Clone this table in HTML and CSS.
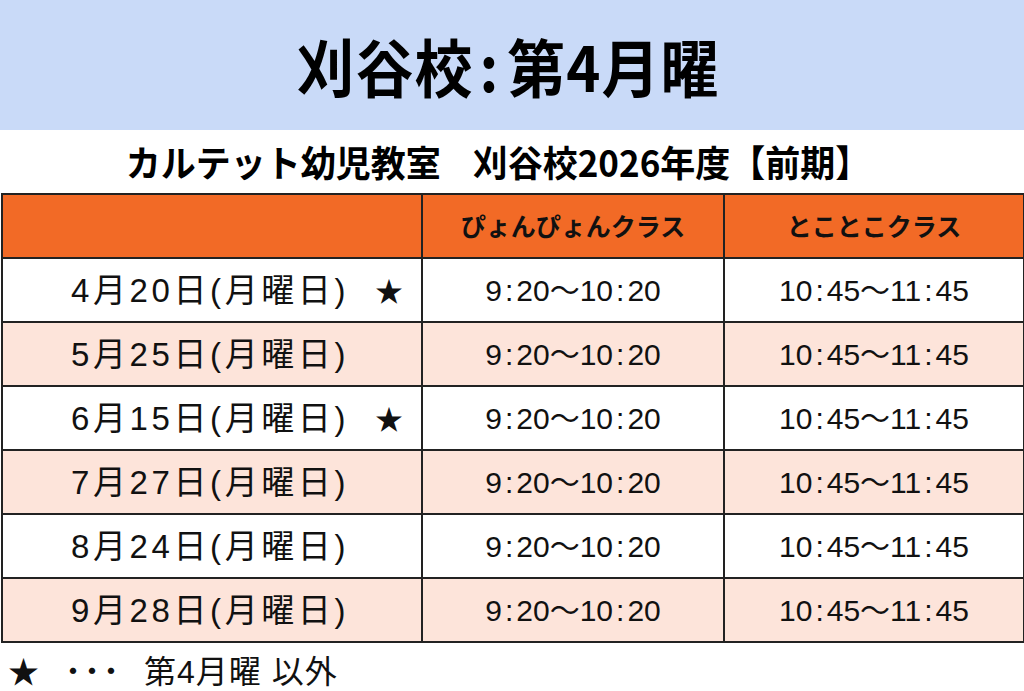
FILE: index.html
```html
<!DOCTYPE html>
<html lang="ja">
<head>
<meta charset="utf-8">
<link rel="stylesheet" href="styles.css">
</head>
<body>
<header class="band"><h1 class="title">刈谷校<span class="colon">:</span>第4月曜</h1></header>
<h2 class="subtitle">カルテット幼児教室<span class="gap"></span>刈谷校2026年度【前期】</h2>
<table class="sched">
  <colgroup><col class="c1"><col class="c2"><col class="c3"></colgroup>
  <thead>
    <tr><th></th><th>ぴょんぴょんクラス</th><th>とことこクラス</th></tr>
  </thead>
  <tbody>
    <tr><td class="date">4月20日(月曜日)<span class="star">★</span></td><td class="time">9<span class="cl">:</span>20〜10<span class="cl">:</span>20</td><td class="time">10<span class="cl">:</span>45〜11<span class="cl">:</span>45</td></tr>
    <tr class="alt"><td class="date">5月25日(月曜日)</td><td class="time">9<span class="cl">:</span>20〜10<span class="cl">:</span>20</td><td class="time">10<span class="cl">:</span>45〜11<span class="cl">:</span>45</td></tr>
    <tr><td class="date">6月15日(月曜日)<span class="star">★</span></td><td class="time">9<span class="cl">:</span>20〜10<span class="cl">:</span>20</td><td class="time">10<span class="cl">:</span>45〜11<span class="cl">:</span>45</td></tr>
    <tr class="alt"><td class="date">7月27日(月曜日)</td><td class="time">9<span class="cl">:</span>20〜10<span class="cl">:</span>20</td><td class="time">10<span class="cl">:</span>45〜11<span class="cl">:</span>45</td></tr>
    <tr><td class="date">8月24日(月曜日)</td><td class="time">9<span class="cl">:</span>20〜10<span class="cl">:</span>20</td><td class="time">10<span class="cl">:</span>45〜11<span class="cl">:</span>45</td></tr>
    <tr class="alt"><td class="date">9月28日(月曜日)</td><td class="time">9<span class="cl">:</span>20〜10<span class="cl">:</span>20</td><td class="time">10<span class="cl">:</span>45〜11<span class="cl">:</span>45</td></tr>
  </tbody>
</table>
<p class="note"><span class="nstar">★</span><span class="dots">・・・</span><span class="ntext">第4月曜 以外</span></p>
</body>
</html>
```

FILE: styles.css
```css
* { box-sizing: border-box; }
html, body { margin: 0; padding: 0; background: #ffffff; }
body {
  width: 1024px;
  height: 691px;
  overflow: hidden;
  font-family: "Liberation Sans", "Noto Sans CJK JP", sans-serif;
  color: #111;
}
.band {
  height: 130px;
  background: #c9daf8;
  display: flex;
  align-items: center;
  justify-content: center;
}
.title {
  margin: 0;
  font-family: "Noto Sans CJK JP", sans-serif;
  font-weight: 700;
  font-size: 58px;
  line-height: 1;
  letter-spacing: 1px;
  transform: scaleY(1.08);
  color: #000;
  padding-right: 8px;
}
.colon { margin: 0 8px 0 6px; }
.subtitle {
  margin: 0;
  height: 63px;
  display: flex;
  align-items: center;
  justify-content: center;
  font-family: "Noto Sans CJK JP", sans-serif;
  font-weight: 700;
  font-size: 35px;
  color: #000;
  padding-right: 28px;
  padding-bottom: 2px;
  transform: scaleY(1.05);
}
.gap { display: inline-block; width: 32px; }
.sched {
  margin-left: 1px;
  width: 1022px;
  border-collapse: collapse;
  table-layout: fixed;
}
.c1 { width: 420px; }
.c2 { width: 302px; }
.c3 { width: 300px; }
.sched th, .sched td {
  border: 2px solid #222;
  height: 64px;
  padding: 0;
}
.sched th {
  background: #f26a26;
  font-family: "Noto Sans CJK JP", sans-serif;
  font-weight: 700;
  font-size: 25px;
  color: #111;
  text-align: center;
  padding-bottom: 2px;
}
.sched tbody tr { background: #ffffff; }
.sched tbody tr.alt { background: #fde4da; }
.date {
  text-align: left;
  padding-left: 68px !important;
  padding-bottom: 4px !important;
  font-size: 33px;
  letter-spacing: 3.6px;
  white-space: nowrap;
}
.star {
  margin-left: 26px;
  font-family: "Noto Sans CJK JP", sans-serif;
  font-size: 28px;
  letter-spacing: 0;
}
.time {
  text-align: center;
  font-size: 30px;
  padding-bottom: 4px !important;
}
.cl { margin: 0 3px; }
.note {
  margin: 0;
  height: 48px;
  display: flex;
  align-items: center;
  padding-left: 8px;
  padding-top: 4px;
  font-size: 31px;
}
.nstar { font-family: "Noto Sans CJK JP", sans-serif; font-size: 31px; width: 50px; }
.dots { width: 86px; letter-spacing: -11px; font-family: "Noto Sans CJK JP", sans-serif; font-size: 30px; }
.ntext { font-size: 32px; letter-spacing: 1px; }
```
